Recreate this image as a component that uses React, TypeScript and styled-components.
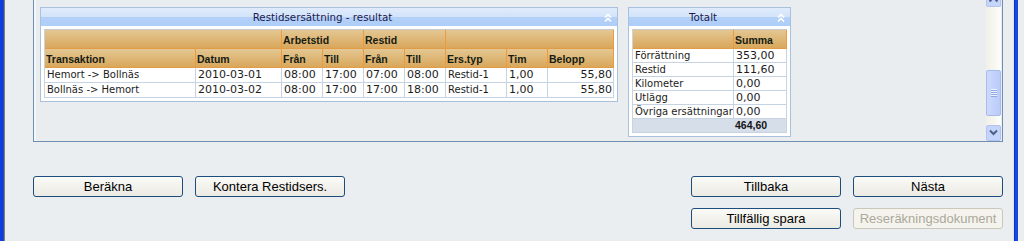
import React from "react";
import styled, { createGlobalStyle } from "styled-components";

const Global = createGlobalStyle`
  html, body { margin: 0; padding: 0; background: #ebeef1; }
  body { width: 1024px; height: 241px; overflow: hidden; font-family: "DejaVu Sans", Verdana, sans-serif; }
`;

const Frame = styled.div`
  display: flex;
  height: 241px;
`;

const LeftEdge = styled.div`
  flex: none;
  width: 5px;
  background: linear-gradient(to right, #0a3ee2 0 3px, #34479c 3px 4px, #7e7e7e 4px 5px);
`;

const RightEdge = styled.div`
  flex: none;
  width: 11px;
  background: linear-gradient(to right, #dfe2e6 0 1px, #0b33cc 1px 2px, #1848e0 2px 5px, #ebeef1 5px 11px);
`;

const Content = styled.div`
  flex: 1;
  display: flex;
  flex-direction: column;
`;

const ScrollBox = styled.div`
  margin: 0 10px 0 28px;
  height: 142px;
  box-sizing: border-box;
  border: 1px solid #6e8fb2;
  border-top: none;
  display: flex;
  background: #eaedf0;
  box-shadow: inset 2px 0 0 #f4f6f9;
`;

const ScrollContent = styled.div`
  flex: 1;
  display: flex;
  align-items: flex-start;
  gap: 10px;
  padding: 7px 0 0 6px;
`;

const Panel = styled.div`
  background: #fff;
  border: 1px solid #a9c1de;
  display: flex;
  flex-direction: column;
`;

const PanelHeader = styled.div`
  height: 18px;
  display: flex;
  align-items: center;
  background: linear-gradient(to bottom, #e0ebfc 0, #d2e3fa 9px, #b3d1f8 9px, #aecdf8 18px);
`;

const PanelTitle = styled.div`
  flex: 1;
  text-align: center;
  font-family: "DejaVu Sans", Verdana, sans-serif;
  font-size: 10.3px;
  color: #1e1a4e;
  line-height: 18px;
`;

const CollapseIcon = styled.div`
  width: 13px;
  display: flex;
  align-items: center;
  justify-content: flex-start;
`;

const PanelBody = styled.div`
  padding: 3px;
`;

const Table = styled.table<{ $w: number }>`
  width: ${(p) => p.$w}px;
  table-layout: fixed;
  border-collapse: separate;
  border-spacing: 0;
  border-left: 1px solid #ccd3dc;
  border-top: 1px solid #c9c9c9;
  font-family: "DejaVu Sans", Verdana, sans-serif;
  font-size: 10px;
`;

const Col = styled.col<{ $w: number }>`
  width: ${(p) => p.$w}px;
`;

const HeadCell = styled.th<{ $line?: boolean }>`
  height: 19px;
  padding: 2px 1px 0;
  box-sizing: border-box;
  text-align: left;
  vertical-align: middle;
  font-family: "Liberation Sans", Arial, sans-serif;
  font-weight: bold;
  font-size: 10.5px;
  color: #141c14;
  white-space: nowrap;
  overflow: hidden;
  background: linear-gradient(to bottom, #e3c793, #d9a75b);
  border-bottom: 1px solid #e29c45;
  border-right: 1px solid ${(p) => (p.$line ? "#f09a3a" : "transparent")};
`;

const Cell = styled.td<{ $right?: boolean; $num?: boolean; $h: number }>`
  height: ${(p) => p.$h}px;
  padding: 0 1px 0 2px;
  line-height: ${(p) => p.$h}px;
  text-align: ${(p) => (p.$right ? "right" : "left")};
  font-family: "DejaVu Sans", Verdana, sans-serif;
  font-size: ${(p) => (p.$num ? "11px" : "10px")};
  color: #1c1c1c;
  white-space: nowrap;
  overflow: hidden;
  border-right: 1px solid #c6d3e2;
  border-bottom: 1px solid #c6d3e2;
`;

const TotalCell = styled.td`
  height: 13px;
  padding: 0 1px;
  line-height: 13px;
  background: #d6dee9;
  font-family: "Liberation Sans", Arial, sans-serif;
  font-weight: bold;
  font-size: 10.5px;
  color: #141414;
  border-bottom: 1px solid #c6d3e2;
  &:last-child { border-right: 1px solid #c6d3e2; }
`;

const ScrollBar = styled.div`
  flex: none;
  width: 15px;
  margin-right: 1px;
  display: flex;
  flex-direction: column;
  background: linear-gradient(to right, #f0efe8, #fdfdfb);
`;

const ArrowStub = styled.div`
  height: 7px;
  box-sizing: border-box;
  border: 1px solid #b2c4ee;
  border-top: none;
  border-radius: 0 0 2px 2px;
  background: #c6d5fc;
  overflow: hidden;
  display: flex;
`;

const Track = styled.div`
  flex: 1;
  padding-top: 63px;
`;

const Thumb = styled.div`
  height: 46px;
  box-sizing: border-box;
  border: 1px solid #a7bcec;
  border-radius: 2px;
  background: linear-gradient(to right, #cddafd, #b9cbfa);
  display: flex;
  align-items: center;
  justify-content: center;
`;

const Grip = styled.div`
  width: 6px;
  height: 8px;
  background: repeating-linear-gradient(to bottom, #eef3fe 0 1px, #8ea7e2 1px 2px);
`;

const ArrowButton = styled.div`
  height: 16px;
  box-sizing: border-box;
  border: 1px solid #b2c4ee;
  border-radius: 2px;
  background: #c4d4fc;
  display: flex;
`;

const ButtonArea = styled.div`
  margin: 34px 10px 0 28px;
  display: flex;
  justify-content: space-between;
  align-items: flex-start;
`;

const ButtonRow = styled.div`
  display: flex;
  gap: 12px;
`;

const ButtonGrid = styled.div`
  display: grid;
  grid-template-columns: 150px 150px;
  column-gap: 12px;
  row-gap: 11px;
`;

const Button = styled.button<{ $disabled?: boolean }>`
  width: 150px;
  height: 21px;
  box-sizing: border-box;
  padding: 0;
  border: 1px solid ${(p) => (p.$disabled ? "#cac8bb" : "#1d4c7e")};
  border-radius: 3px;
  background: ${(p) =>
    p.$disabled ? "#f4f3ee" : "linear-gradient(to bottom, #fafaf7, #ebeae3)"};
  font-family: "Liberation Sans", Arial, sans-serif;
  font-size: 13px;
  line-height: 19px;
  color: ${(p) => (p.$disabled ? "#aca899" : "#000")};
  text-align: center;
  cursor: default;
`;

const DoubleChevron = () => (
  <svg width="8" height="9" viewBox="0 0 8 9">
    <polyline points="1,4.5 4,1.5 7,4.5" fill="none" stroke="#fff" strokeWidth="1.6" />
    <polyline points="1,8.5 4,5.5 7,8.5" fill="none" stroke="#fff" strokeWidth="1.6" />
  </svg>
);

const rows = [
  ["Hemort -> Bollnäs", "2010-03-01", "08:00", "17:00", "07:00", "08:00", "Restid-1", "1,00", "55,80"],
  ["Bollnäs -> Hemort", "2010-03-02", "08:00", "17:00", "17:00", "18:00", "Restid-1", "1,00", "55,80"],
];

const totals = [
  ["Förrättning", "353,00"],
  ["Restid", "111,60"],
  ["Kilometer", "0,00"],
  ["Utlägg", "0,00"],
  ["Övriga ersättningar", "0,00"],
];

const resultCols = [151, 86, 41, 41, 41, 41, 61, 41, 66];

export default function App() {
  return (
    <>
      <Global />
      <Frame>
        <LeftEdge />
        <Content>
          <ScrollBox>
            <ScrollContent>
              <Panel>
                <PanelHeader>
                  <PanelTitle>Restidsersättning - resultat</PanelTitle>
                  <CollapseIcon>
                    <DoubleChevron />
                  </CollapseIcon>
                </PanelHeader>
                <PanelBody>
                  <Table $w={570}>
                    <colgroup>
                      {resultCols.map((w, i) => (
                        <Col key={i} $w={w} />
                      ))}
                    </colgroup>
                    <thead>
                      <tr>
                        <HeadCell colSpan={2} $line />
                        <HeadCell colSpan={2} $line>Arbetstid</HeadCell>
                        <HeadCell colSpan={2} $line>Restid</HeadCell>
                        <HeadCell colSpan={3} $line />
                      </tr>
                      <tr>
                        <HeadCell $line>Transaktion</HeadCell>
                        <HeadCell $line>Datum</HeadCell>
                        <HeadCell $line>Från</HeadCell>
                        <HeadCell $line>Till</HeadCell>
                        <HeadCell $line>Från</HeadCell>
                        <HeadCell $line>Till</HeadCell>
                        <HeadCell $line>Ers.typ</HeadCell>
                        <HeadCell $line>Tim</HeadCell>
                        <HeadCell $line>Belopp</HeadCell>
                      </tr>
                    </thead>
                    <tbody>
                      {rows.map((r, i) => (
                        <tr key={i}>
                          {r.map((c, j) => (
                            <Cell key={j} $h={14} $right={j === 8} $num={j !== 0 && j !== 6}>
                              {c}
                            </Cell>
                          ))}
                        </tr>
                      ))}
                    </tbody>
                  </Table>
                </PanelBody>
              </Panel>
              <Panel>
                <PanelHeader>
                  <PanelTitle>Totalt</PanelTitle>
                  <CollapseIcon>
                    <DoubleChevron />
                  </CollapseIcon>
                </PanelHeader>
                <PanelBody>
                  <Table $w={154}>
                    <colgroup>
                      <Col $w={101} />
                      <Col $w={53} />
                    </colgroup>
                    <thead>
                      <tr>
                        <HeadCell $line />
                        <HeadCell $line>Summa</HeadCell>
                      </tr>
                    </thead>
                    <tbody>
                      {totals.map(([label, value]) => (
                        <tr key={label}>
                          <Cell $h={13}>{label}</Cell>
                          <Cell $h={13} $num>{value}</Cell>
                        </tr>
                      ))}
                      <tr>
                        <TotalCell />
                        <TotalCell>464,60</TotalCell>
                      </tr>
                    </tbody>
                  </Table>
                </PanelBody>
              </Panel>
            </ScrollContent>
            <ScrollBar>
              <ArrowStub>
                <svg width="13" height="6" viewBox="0 0 13 6">
                  <polyline points="2.5,1.5 6.5,-2.5 10.5,1.5" fill="none" stroke="#4d6185" strokeWidth="2" />
                </svg>
              </ArrowStub>
              <Track>
                <Thumb>
                  <Grip />
                </Thumb>
              </Track>
              <ArrowButton>
                <svg width="13" height="14" viewBox="0 0 13 14">
                  <polyline points="3,4.5 6.5,8 10,4.5" fill="none" stroke="#4d6185" strokeWidth="2" />
                </svg>
              </ArrowButton>
            </ScrollBar>
          </ScrollBox>
          <ButtonArea>
            <ButtonRow>
              <Button>Beräkna</Button>
              <Button>Kontera Restidsers.</Button>
            </ButtonRow>
            <ButtonGrid>
              <Button>Tillbaka</Button>
              <Button>Nästa</Button>
              <Button>Tillfällig spara</Button>
              <Button $disabled disabled>
                Reseräkningsdokument
              </Button>
            </ButtonGrid>
          </ButtonArea>
        </Content>
        <RightEdge />
      </Frame>
    </>
  );
}
